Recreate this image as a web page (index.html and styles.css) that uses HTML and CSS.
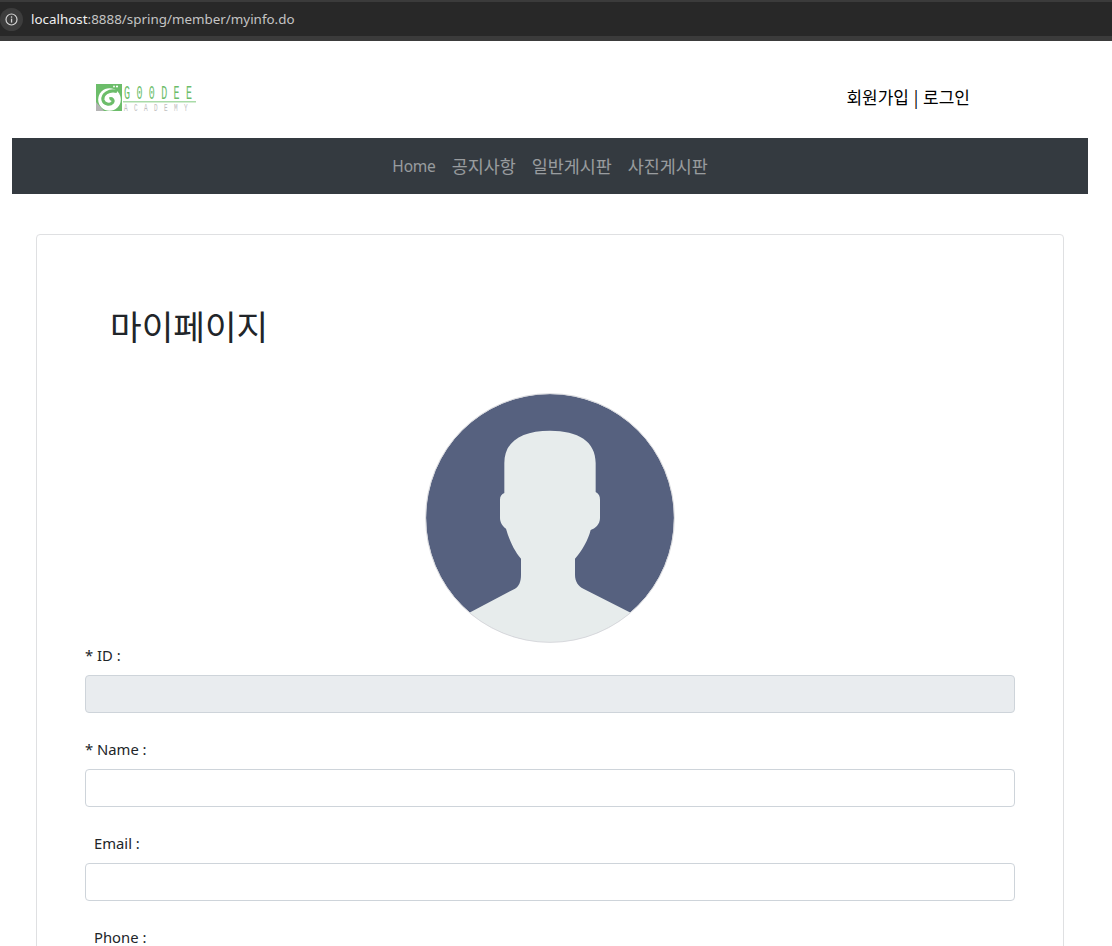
FILE: index.html
```html
<!DOCTYPE html>
<html lang="ko">
<head>
<meta charset="utf-8">
<title>마이페이지</title>
<link rel="stylesheet" href="styles.css">
</head>
<body>
<div class="viewport">
  <div class="urlbar">
    <div class="urlbar-inner">
      <span class="info-btn">
        <svg width="13" height="13" viewBox="0 0 13 13" fill="none">
          <circle cx="6.5" cy="6.5" r="5.5" stroke="#d4d4d4" stroke-width="1.2"/>
          <rect x="5.9" y="5.6" width="1.3" height="4" fill="#d4d4d4"/>
          <rect x="5.9" y="3.3" width="1.3" height="1.4" fill="#d4d4d4"/>
        </svg>
      </span>
      <span class="url"><span class="url-host">localhost</span>:8888/spring/member/myinfo.do</span>
    </div>
  </div>
  <div class="page">
    <header class="top">
      <a class="logo" href="#">
        <svg width="104" height="32" viewBox="0 0 104 32">
          <rect x="0" y="0" width="26" height="27" fill="#6cbd6a"/>
          <path d="M0 27 L0 18 L8 27 Z" fill="#b4b4b4"/>
          <circle cx="13.500" cy="15.500" r="11.300" fill="#fff"/>
          <path d="M21 7.500 C13 5.500 6 10 7 16 C8 20.500 14 21.500 16.500 18.500 C18 16.500 16 14 13.500 15" fill="none" stroke="#6cbd6a" stroke-width="3.200"/>
          <circle cx="18" cy="2.500" r=".9" fill="#fff"/>
          <circle cx="21" cy="2.500" r="1.100" fill="#fff"/>
          <text class="logo-main" transform="translate(28 15) scale(.5 1)">G00DEE</text>
          <rect x="27" y="17" width="73" height="1.500" fill="#a9dba8"/>
          <text class="logo-sub" transform="translate(28 26.500) scale(.55 1)">ACADEMY</text>
        </svg>
      </a>
      <div class="auth"><a href="#">회원가입</a> | <a href="#">로그인</a></div>
    </header>
    <nav class="nav">
      <a href="#" class="nav-latin">Home</a>
      <a href="#">공지사항</a>
      <a href="#">일반게시판</a>
      <a href="#">사진게시판</a>
    </nav>
    <main class="card">
      <h2 class="title">마이페이지</h2>
      <div class="avatar-wrap">
        <svg class="avatar" width="250" height="250" viewBox="30 25 750 750">
          <circle cx="405" cy="400" r="372" fill="#56617f"/>
          <path d="M268 325 L268 235 C268 170 320 138 405 138 C490 138 542 170 542 235 L542 322 C552 328 555 335 555 345 L555 400 C555 420 540 432 527 436 C520 465 500 500 480 522 L480 570 C480 590 490 605 505 612 L647 684 A373 373 0 0 1 163 684 L300 612 C312 605 318 590 318 570 L318 522 C298 500 282 465 273 432 C262 425 255 412 255 400 L255 345 C255 335 260 328 268 325 Z" fill="#e7ecec"/>
          <circle cx="405" cy="400" r="373" fill="none" stroke="#d8d9dd" stroke-width="3"/>
        </svg>
      </div>
      <form class="form">
        <div class="field">
          <label class="label">* ID :</label>
          <input class="input" type="text" disabled>
        </div>
        <div class="field">
          <label class="label">* Name :</label>
          <input class="input" type="text">
        </div>
        <div class="field">
          <label class="label label-plain">Email :</label>
          <input class="input" type="text">
        </div>
        <div class="field">
          <label class="label label-plain">Phone :</label>
          <input class="input" type="text">
        </div>
      </form>
    </main>
  </div>
</div>
</body>
</html>
```
FILE: styles.css
```css
* { box-sizing: border-box; }
html, body { margin: 0; padding: 0; background: #fff; }
body {
  font-family: "Noto Sans", "Noto Sans CJK KR", "Liberation Sans", sans-serif;
  font-size: 14.8px;
  line-height: 24px;
  color: #212529;
}
a { color: inherit; text-decoration: none; }
.viewport { height: 946px; overflow: hidden; }

.urlbar { height: 41px; background: #3b3b3b; padding-top: 2px; }
.urlbar-inner {
  height: 34px;
  background: #282828;
  display: flex;
  align-items: center;
}
.info-btn {
  width: 23px;
  height: 23px;
  border-radius: 50%;
  background: #3d3d3d;
  display: flex;
  align-items: center;
  justify-content: center;
}
.url {
  margin-left: 8px;
  font-size: 13.4px;
  color: #c4c4c4;
  white-space: nowrap;
}
.url-host { color: #f0f0f0; }

.page { padding: 0 24px 0 12px; }
.top {
  height: 97px;
  padding: 16px 118px 0 84px;
  display: flex;
  align-items: center;
  justify-content: space-between;
}
.logo { display: flex; margin-top: 4px; }
.logo-main {
  font-family: "Liberation Mono", monospace;
  font-size: 20px;
  letter-spacing: 12.8px;
  fill: #6cbd6a;
}
.logo-sub {
  font-family: "Liberation Mono", monospace;
  font-size: 11px;
  letter-spacing: 11.6px;
  fill: #c0c0c0;
}
.auth {
  color: #000;
  font-size: 17px;
  line-height: 20px;
  margin-top: -2px;
  font-family: "Noto Sans CJK KR", "Noto Sans", sans-serif;
}

.nav {
  height: 56px;
  background: #343a40;
  display: flex;
  align-items: center;
  justify-content: center;
  gap: 16px;
  color: rgba(255, 255, 255, 0.5);
  font-size: 17.4px;
  font-family: "Noto Sans CJK KR", "Noto Sans", sans-serif;
}
.nav-latin { font-family: "Noto Sans", sans-serif; font-size: 15.5px; letter-spacing: -0.2px; }

.card {
  margin: 40px 24px 0;
  border: 1px solid #dfe0e2;
  border-radius: 4px;
  padding: 66px 48px 48px;
}
.title {
  margin: 0 0 44px;
  padding-left: 25px;
  font-family: "Noto Sans CJK KR", "Noto Sans", sans-serif;
  font-size: 34.4px;
  font-weight: 400;
  line-height: 48px;
}
.avatar-wrap { display: flex; justify-content: center; }
.avatar { display: block; }

.form { display: flex; flex-direction: column; gap: 24px; }
.label { display: block; height: 24px; margin-bottom: 8px; }
.label-plain { padding-left: 9px; }
.input {
  display: block;
  width: 100%;
  height: 38px;
  padding: 6px 12px;
  border: 1px solid #ced4da;
  border-radius: 4px;
  background: #fff;
  font: inherit;
}
.input:disabled { background: #e9ecef; }
```
